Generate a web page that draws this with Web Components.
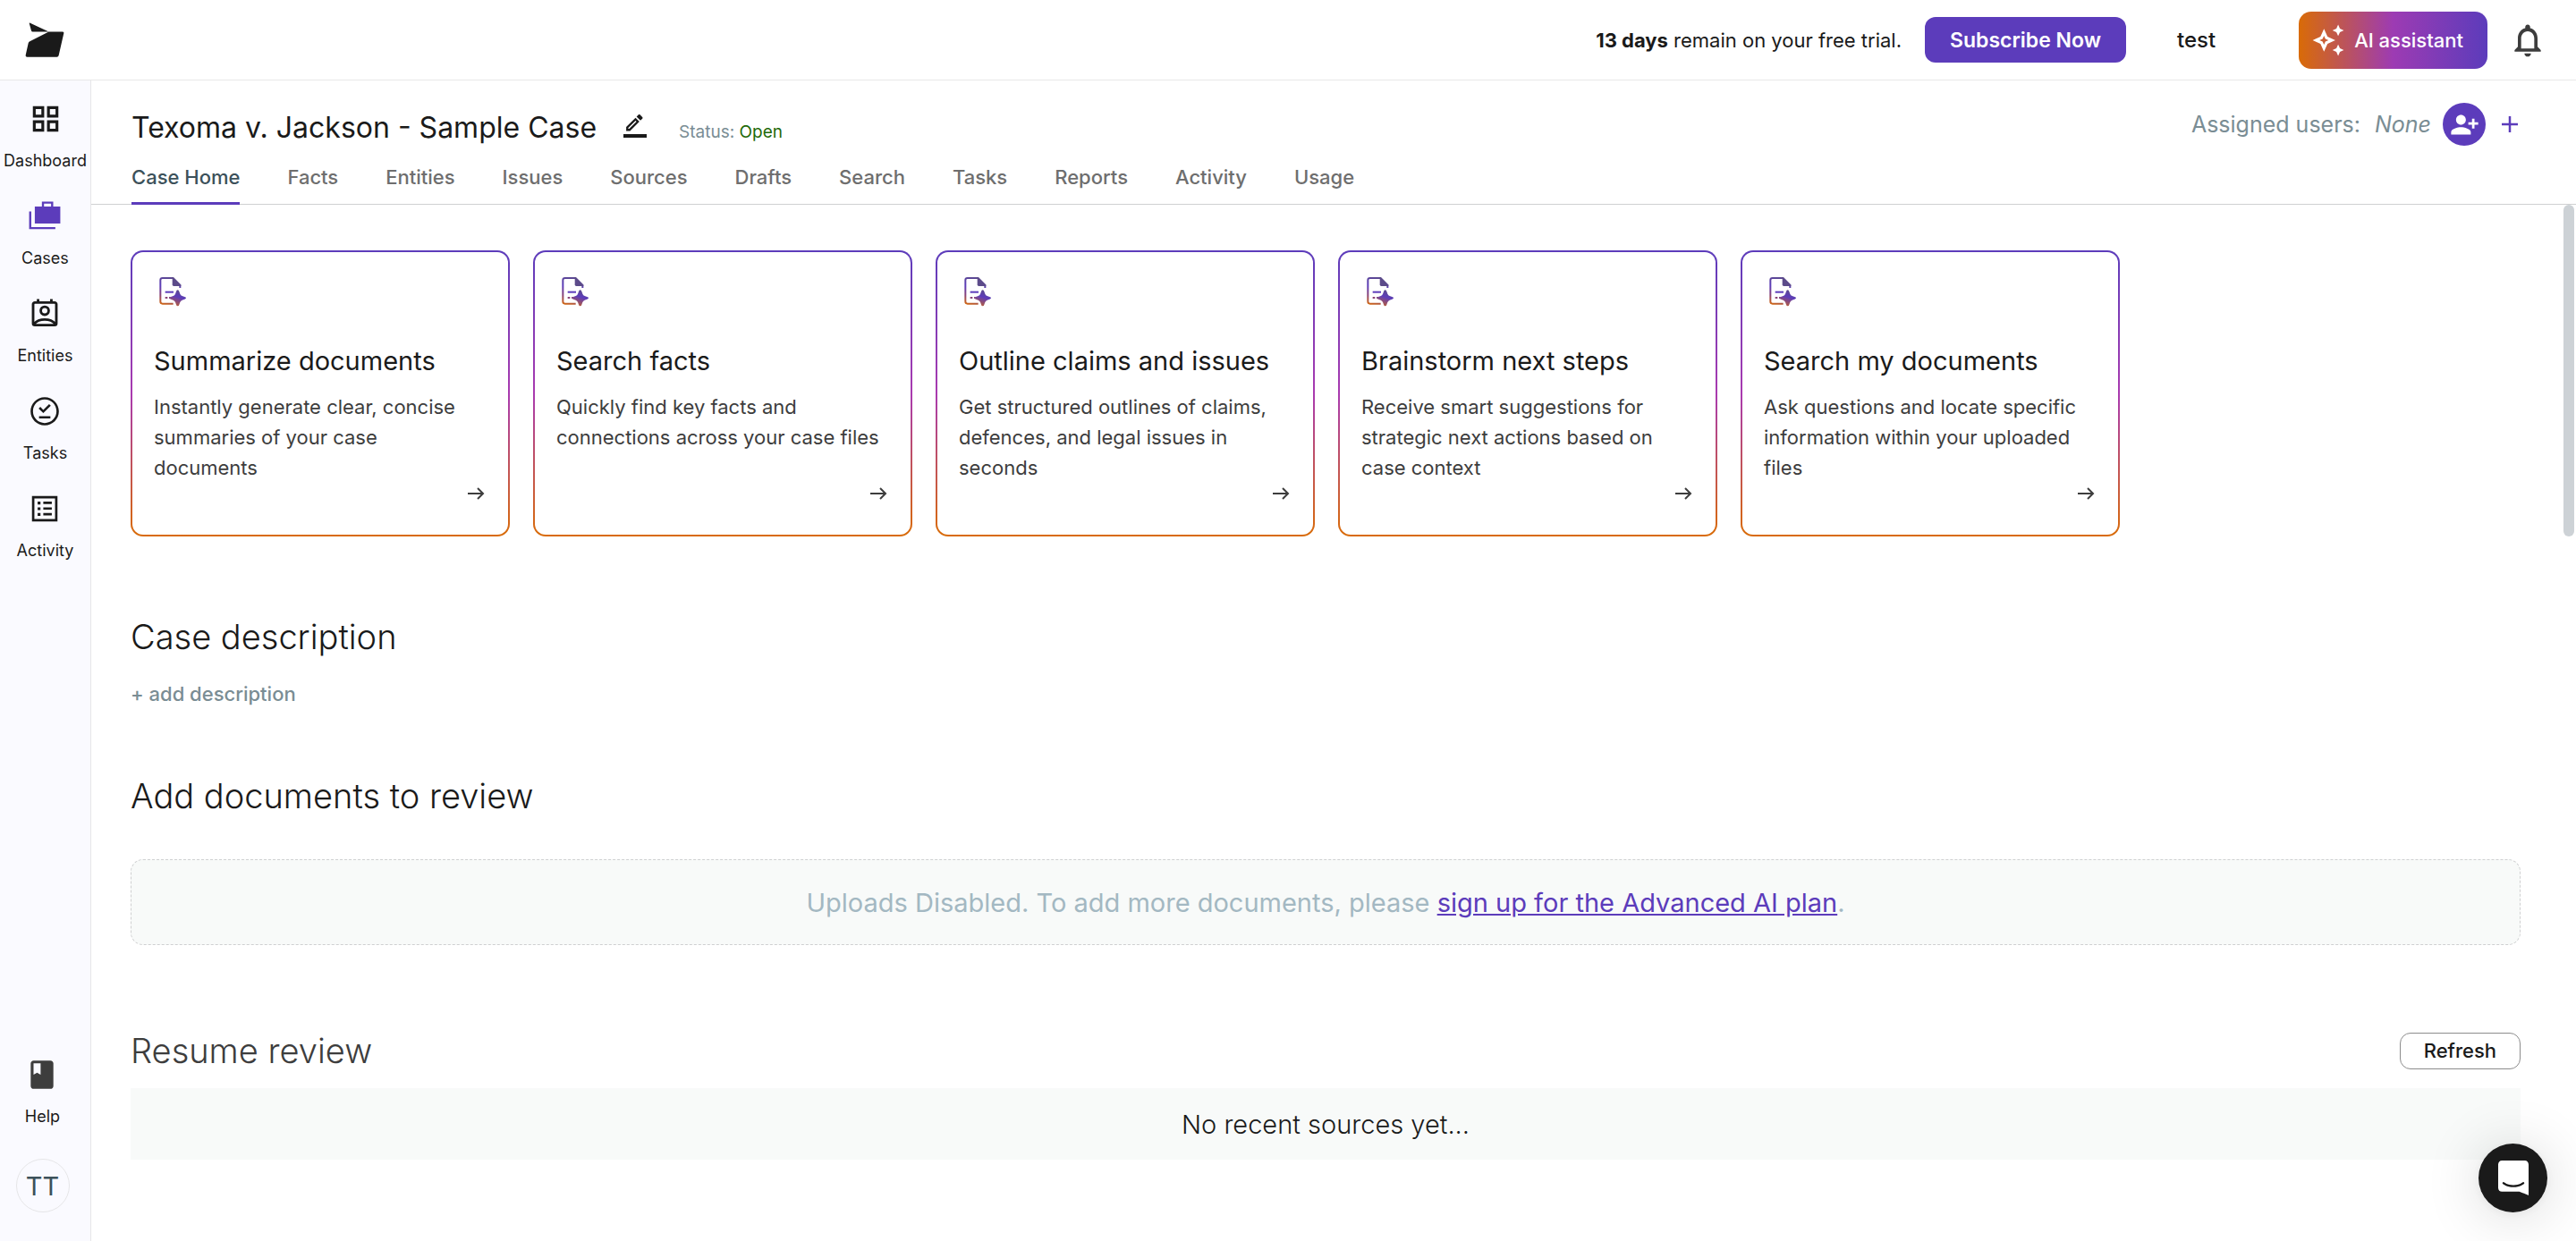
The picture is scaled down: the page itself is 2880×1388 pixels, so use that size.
<!DOCTYPE html>
<html lang="en">
<head>
<meta charset="utf-8">
<title>Texoma v. Jackson - Sample Case</title>
<style>
    body {
        margin: 0;
        font-family: Inter, "Liberation Sans", sans-serif;
        color: #1a1a1a;
        background-color: #fff;
    }
</style>
</head>
<body>
<case-app>
    <top-bar slot="top" days="13" user="test"></top-bar>
    <side-nav slot="side">
        <nav-item icon="dashboard">Dashboard</nav-item>
        <nav-item icon="cases" active>Cases</nav-item>
        <nav-item icon="entities">Entities</nav-item>
        <nav-item icon="tasks">Tasks</nav-item>
        <nav-item icon="activity">Activity</nav-item>
        <nav-item slot="bottom" icon="help">Help</nav-item>
        <user-avatar slot="bottom">TT</user-avatar>
    </side-nav>
    <case-header slot="header" name="Texoma v. Jackson - Sample Case" status="Open"></case-header>

    <card-row>
        <prompt-card heading="Summarize documents">Instantly generate clear, concise summaries of your case documents</prompt-card>
        <prompt-card heading="Search facts">Quickly find key facts and connections across your case files</prompt-card>
        <prompt-card heading="Outline claims and issues">Get structured outlines of claims, defences, and legal issues in seconds</prompt-card>
        <prompt-card heading="Brainstorm next steps">Receive smart suggestions for strategic next actions based on case context</prompt-card>
        <prompt-card heading="Search my documents">Ask questions and locate specific information within your uploaded files</prompt-card>
    </card-row>
    <case-description></case-description>
    <upload-box></upload-box>
    <resume-review></resume-review>
    <chat-launcher slot="overlay"></chat-launcher>
</case-app>

<script>
const icons = {
    dashboard: '<path d="M3 3v8h8V3H3zm6 6H5V5h4v4zm-6 4v8h8v-8H3zm6 6H5v-4h4v4zm4-16v8h8V3h-8zm6 6h-4V5h4v4zm-6 4v8h8v-8h-8zm6 6h-4v-4h4v4z"/>',
    cases: '<path d="M5 5v12h18V5h-5V1.500h-8V5H5zm6.500-2h5v2h-5V3z"/><path d="M1 8.500h1.500V19.500H19.500V21H1z"/>',
    entities: '<path fill="none" stroke="currentColor" stroke-width="1.800" d="M5 4h14a1.200 1.200 0 0 1 1.200 1.200v13.600A1.200 1.200 0 0 1 19 20H5a1.200 1.200 0 0 1-1.200-1.200V5.200A1.200 1.200 0 0 1 5 4zM7.300 4V1.500M16.700 4V1.500M4.500 19c2-2.300 5-3 7.500-3s5.500.7 7.500 3"/><circle cx="12" cy="9.800" r="2.800" fill="none" stroke="currentColor" stroke-width="1.800"/>',
    tasks: '<path d="M12 2C6.500 2 2 6.500 2 12s4.500 10 10 10 10-4.500 10-10S17.500 2 12 2zm0 18.300c-4.600 0-8.300-3.700-8.300-8.300S7.400 3.700 12 3.700s8.300 3.700 8.300 8.300-3.700 8.300-8.300 8.300z"/><path d="M8 15.500h8v1.500H8zM16.300 8l-5.300 5.300-3.300-3.200 1.200-1.200 2.100 2.100 4.100-4.100z"/>',
    activity: '<path d="M3 3v18h18V3H3zm16.300 16.300H4.700V4.700h14.600v14.600z"/><path d="M7 7h2v2H7zM11 7h6v1.700h-6zM7 11h2v2H7zM11 11h6v1.700h-6zM7 15h2v2H7zM11 15h6v1.700h-6z"/>',
    help: '<path d="M18 2H6c-1.100 0-2 .9-2 2v16c0 1.100.9 2 2 2h12c1.100 0 2-.9 2-2V4c0-1.100-.9-2-2-2zM6 4h5v8l-2.500-1.500L6 12V4z"/>'
};

class BaseElement extends HTMLElement {
    constructor() {
        super();
        this.shadow = this.attachShadow({ mode: 'open' });
    }
    connectedCallback() {
        this.render();
    }
}

class CaseApp extends BaseElement {
    render() {
        this.shadow.innerHTML = /*html*/`
            <style>
                :host {
                    display: flex;
                    flex-direction: column;
                    height: 100vh;
                    overflow: hidden;
                }
                .columns {
                    display: flex;
                    flex: 1;
                    min-height: 0;
                }
                main {
                    display: flex;
                    flex-direction: column;
                    flex: 1;
                    min-width: 0;
                }
                .scroller {
                    position: relative;
                    flex: 1;
                    min-height: 0;
                    overflow: hidden;
                    padding: 51px 62px 44px 44px;
                }
                .thumb {
                    position: absolute;
                    top: 0;
                    right: 2px;
                    width: 12px;
                    height: 32%;
                    border-radius: 6px;
                    background-color: #cdd2d6;
                }
            </style>
            <slot name="top"></slot>
            <div class="columns">
                <slot name="side"></slot>
                <main>
                    <slot name="header"></slot>
                    <div class="scroller">
                        <slot></slot>
                        <div class="thumb"></div>
                    </div>
                </main>
            </div>
            <slot name="overlay"></slot>
        `;
    }
}

class TopBar extends BaseElement {
    render() {
        this.shadow.innerHTML = /*html*/`
            <style>
                :host {
                    display: flex;
                    align-items: center;
                    justify-content: space-between;
                    height: 89px;
                    flex: none;
                    padding: 0 32px 0 28px;
                    border-bottom: 1px solid #e8e8e8;
                    font-size: 22px;
                }
                svg {
                    display: block;
                }
                .right {
                    display: flex;
                    align-items: center;
                }
                button {
                    font-family: inherit;
                    border: 0;
                    cursor: pointer;
                }
                .subscribe {
                    height: 51px;
                    margin: 0 57px 0 26px;
                    padding: 0 28px;
                    border-radius: 12px;
                    background-color: #5c3cbb;
                    color: #fff;
                    font-size: 23px;
                    font-weight: 600;
                }
                .user {
                    margin-right: 93px;
                    font-size: 24px;
                    font-weight: 500;
                }
                .assistant {
                    display: flex;
                    align-items: center;
                    gap: 10px;
                    height: 64px;
                    margin-right: 23px;
                    padding: 0 27px 0 14px;
                    border-radius: 14px;
                    background: linear-gradient(90deg, #d96b07, #9d3bb3 50%, #5c3cbb);
                    color: #fff;
                    font-size: 22px;
                    font-weight: 500;
                }
                .bell {
                    padding: 0;
                    background: none;
                    color: #3d3d3d;
                }
            </style>
            <a href="#" aria-label="Home">
                <svg width="44" height="39" viewBox="0 0 129 116" fill="#1a1a1a">
                    <path d="M13 3q0-3 3-1l62 29H24q-3 0-4-3zM78 31h46q5 0 4 5l-17 74q-1 5-6 5H6q-6 0-5-6l9-40q1-4 5-6z"/>
                </svg>
            </a>
            <div class="right">
                <span><b>${this.getAttribute('days')} days</b> remain on your free trial.</span>
                <button class="subscribe">Subscribe Now</button>
                <span class="user">${this.getAttribute('user')}</span>
                <button class="assistant">
                    <svg width="38" height="38" viewBox="0 0 24 24" fill="currentColor">
                        <path d="M19 9l1.250-2.750L23 5l-2.750-1.250L19 1l-1.250 2.750L15 5l2.750 1.250L19 9zm0 6l-1.250 2.750L15 19l2.750 1.250L19 23l1.250-2.750L23 19l-2.750-1.250L19 15zm-7.500-5.500L9 4 6.500 9.500 1 12l5.500 2.500L9 20l2.500-5.500L17 12l-5.500-2.500zm-1.510 3.490L9 15.170l-.99-2.180L5.830 12l2.180-.99L9 8.830l.99 2.180 2.180.99-2.180.99z"/>
                    </svg>
                    AI assistant
                </button>
                <button class="bell" aria-label="Notifications">
                    <svg width="44" height="44" viewBox="0 0 24 24" fill="currentColor">
                        <path d="M12 22c1.100 0 2-.9 2-2h-4c0 1.100.9 2 2 2zm6-6v-5c0-3.070-1.630-5.640-4.500-6.320V4c0-.83-.67-1.500-1.500-1.500s-1.500.67-1.500 1.500v.68C7.640 5.360 6 7.920 6 11v5l-2 2v1h16v-1l-2-2zm-2 1H8v-6c0-2.480 1.510-4.500 4-4.500s4 2.020 4 4.500v6z"/>
                    </svg>
                </button>
            </div>
        `;
    }
}

class SideNav extends BaseElement {
    render() {
        this.shadow.innerHTML = /*html*/`
            <style>
                :host {
                    display: flex;
                    flex: none;
                    width: 101px;
                    background-color: #fafaff;
                    border-right: 1px solid #e6e6e8;
                }
                nav {
                    display: flex;
                    flex-direction: column;
                    justify-content: space-between;
                    width: 100%;
                    padding: 24px 0 32px;
                }
                .group {
                    display: flex;
                    flex-direction: column;
                    align-items: center;
                    gap: 32px;
                }
                .bottom {
                    gap: 36px;
                    padding-right: 6px;
                }
            </style>
            <nav>
                <div class="group"><slot></slot></div>
                <div class="group bottom"><slot name="bottom"></slot></div>
            </nav>
        `;
    }
}

class NavItem extends BaseElement {
    render() {
        this.shadow.innerHTML = /*html*/`
            <style>
                :host {
                    display: block;
                }
                a {
                    display: flex;
                    flex-direction: column;
                    align-items: center;
                    gap: 17px;
                    color: #1a1a1a;
                    font-size: 18px;
                    line-height: 22px;
                    text-decoration: none;
                }
                :host([active]) svg {
                    color: #5c3cbb;
                }
                :host([icon="help"]) svg {
                    color: #3d3d3d;
                }
            </style>
            <a href="#">
                <svg width="38" height="38" viewBox="0 0 24 24" fill="currentColor">${icons[this.getAttribute('icon')]}</svg>
                <span><slot></slot></span>
            </a>
        `;
    }
}

class UserAvatar extends BaseElement {
    render() {
        this.shadow.innerHTML = /*html*/`
            <style>
                :host {
                    display: flex;
                    align-items: center;
                    justify-content: center;
                    box-sizing: border-box;
                    width: 60px;
                    height: 60px;
                    border: 1px solid #e6e6e8;
                    border-radius: 50%;
                    color: #3c515a;
                    font-size: 29px;
                }
            </style>
            <slot></slot>
        `;
    }
}

class CaseHeader extends BaseElement {
    render() {
        const tabs = ['Case Home', 'Facts', 'Entities', 'Issues', 'Sources', 'Drafts', 'Search', 'Tasks', 'Reports', 'Activity', 'Usage'];
        this.shadow.innerHTML = /*html*/`
            <style>
                :host {
                    display: flex;
                    flex-direction: column;
                    gap: 21px;
                    flex: none;
                    padding: 25px 62px 0 45px;
                    border-bottom: 1px solid #cfd0d1;
                }
                .row {
                    display: flex;
                    align-items: flex-end;
                    justify-content: space-between;
                }
                .title {
                    display: flex;
                    align-items: baseline;
                }
                h1 {
                    margin: 0;
                    font-size: 32px;
                    line-height: 40px;
                    font-weight: 400;
                }
                button {
                    padding: 0;
                    border: 0;
                    background: none;
                    color: inherit;
                    font: inherit;
                    cursor: pointer;
                }
                .edit {
                    margin: 0 36px 0 30px;
                }
                .status {
                    color: #7a8d94;
                    font-size: 19px;
                }
                .status span {
                    color: #1f6a0a;
                }
                .users {
                    display: flex;
                    align-items: center;
                    color: #7a8d94;
                    font-size: 25px;
                }
                .users em {
                    margin: 0 13px 0 16px;
                }
                .users svg {
                    display: block;
                }
                .person {
                    display: flex;
                    align-items: center;
                    justify-content: center;
                    width: 48px;
                    height: 48px;
                    margin-right: 15px;
                    border-radius: 50%;
                    background-color: #5c3cbb;
                    color: #fff;
                }
                .add {
                    color: #5c3cbb;
                }
                nav {
                    display: flex;
                    gap: 53px;
                    margin-bottom: -1px;
                }
                nav a {
                    padding-bottom: 14px;
                    border-bottom: 3px solid transparent;
                    color: #6e6e6e;
                    font-size: 22px;
                    line-height: 28px;
                    font-weight: 500;
                    text-decoration: none;
                }
                nav a.active {
                    color: #3c515a;
                    border-color: #5c3cbb;
                }
            </style>
            <div class="row">
                <div class="title">
                    <h1>${this.getAttribute('name')}</h1>
                    <button class="edit" aria-label="Edit case name">
                        <svg width="26" height="26" viewBox="0 0 26 26" fill="currentColor">
                            <path d="M0 22h26v4H0z"/>
                            <path transform="scale(1.150) translate(-1.300 -2)" d="M16.810 8.940l-3.750-3.750L4 14.250V18h3.750l9.060-9.060zM6 16v-.92l7.060-7.060.92.92L6.920 16H6zm13.710-9.960c.39-.39.39-1.020 0-1.410l-2.340-2.340c-.39-.39-1.020-.39-1.410 0l-1.900 1.900 3.750 3.750z"/>
                        </svg>
                    </button>
                    <div class="status">Status: <span>${this.getAttribute('status')}</span></div>
                </div>
                <div class="users">
                    Assigned users: <em>None</em>
                    <button class="person" aria-label="Assign a user">
                        <svg width="33" height="33" viewBox="0 0 24 24" fill="currentColor">
                            <path d="M13 8c0-2.210-1.790-4-4-4S5 5.790 5 8s1.790 4 4 4 4-1.790 4-4zm2 2v2h3v3h2v-3h3v-2h-3V7h-2v3h-3zM1 18v2h16v-2c0-2.660-5.330-4-8-4s-8 1.340-8 4z"/>
                        </svg>
                    </button>
                    <button class="add" aria-label="Add">
                        <svg width="24" height="24" viewBox="0 0 24 24" fill="none" stroke="currentColor" stroke-width="2.500"><path d="M12 3v18M3 12h18"/></svg>
                    </button>
                </div>
            </div>
            <nav>${tabs.map((tab, i) => `<a href="#"${i === 0 ? ' class="active"' : ''}>${tab}</a>`).join('')}</nav>
        `;
    }
}

class CardRow extends BaseElement {
    render() {
        this.shadow.innerHTML = /*html*/`
            <style>
                :host {
                    display: flex;
                    flex-wrap: wrap;
                    gap: 26px;
                }
            </style>
            <slot></slot>
        `;
    }
}

class PromptCard extends BaseElement {
    render() {
        this.shadow.innerHTML = /*html*/`
            <style>
                :host {
                    display: flex;
                    width: 424px;
                }
                a {
                    display: flex;
                    flex-direction: column;
                    box-sizing: border-box;
                    width: 100%;
                    padding: 24px 24px 34px;
                    border: 2px solid transparent;
                    border-radius: 14px;
                    background:
                        linear-gradient(#fff, #fff) padding-box,
                        linear-gradient(180deg, #5c3cbb, #a93ab0 50%, #d96b07) border-box;
                    color: inherit;
                    text-decoration: none;
                }
                h2 {
                    margin: 40px 0 16px;
                    font-size: 29px;
                    line-height: 36px;
                    font-weight: 400;
                }
                p {
                    margin: 0;
                    padding-right: 4px;
                    color: #3d3d3d;
                    font-size: 22px;
                    line-height: 34px;
                }
                .arrow {
                    margin-top: auto;
                    align-self: flex-end;
                }
            </style>
            <a href="#">
                <svg width="40" height="40" viewBox="-19 -12 120 120">
                    <defs>
                        <linearGradient id="doc" gradientUnits="userSpaceOnUse" x1="50" y1="0" x2="20" y2="98">
                            <stop offset="0" stop-color="#5c4b8a"/>
                            <stop offset=".4" stop-color="#5c3cbb"/>
                            <stop offset=".7" stop-color="#8a4577"/>
                            <stop offset="1" stop-color="#d96b07"/>
                        </linearGradient>
                        <linearGradient id="star" gradientUnits="userSpaceOnUse" x1="68" y1="44" x2="50" y2="98">
                            <stop offset="0" stop-color="#5c4b8a"/>
                            <stop offset=".4" stop-color="#5c3cbb"/>
                            <stop offset="1" stop-color="#c0602f"/>
                        </linearGradient>
                    </defs>
                    <path d="M46 89H10q-7 0-7-7V10q0-7 7-7h35l24 24v9" fill="none" stroke="url(#doc)" stroke-width="6"/>
                    <path d="M43 1h4l25 25v4H48q-5 0-5-5z" fill="#5c4b8a"/>
                    <path d="M19 47h28v6H19z" fill="#5c3cbb"/>
                    <path d="M19 66h8v6h-8zM32 66h5v6h-5z" fill="#8a4577"/>
                    <path d="M61 43q4 0 5 5l3 8q2 5 7 7l8 3q5 1 5 4t-5 4l-8 3q-5 2-7 7l-3 8q-1 5-5 5t-5-5l-3-8q-2-5-7-7l-8-3q-5-1-5-4t5-4l8-3q5-2 7-7l3-8q1-5 5-5z" fill="url(#star)"/>
                </svg>
                <h2>${this.getAttribute('heading')}</h2>
                <p><slot></slot></p>
                <svg class="arrow" width="24" height="24" viewBox="0 0 24 24" fill="none" stroke="#3d3d3d" stroke-width="2"><path d="M3 12h17M14 6l6 6-6 6"/></svg>
            </a>
        `;
    }
}

// shared by the three sections under the cards
const sectionStyle = /*css*/`
    :host {
        display: block;
    }
    h2 {
        margin: 0;
        font-size: 38px;
        line-height: 48px;
        font-weight: 300;
    }
`;

class CaseDescription extends BaseElement {
    render() {
        this.shadow.innerHTML = /*html*/`
            <style>
                ${sectionStyle}
                :host {
                    margin-top: 88px;
                }
                button {
                    display: block;
                    margin-top: 26px;
                    padding: 0;
                    border: 0;
                    background: none;
                    color: #7a8d94;
                    font-family: inherit;
                    font-size: 22px;
                    line-height: 28px;
                    font-weight: 500;
                    cursor: pointer;
                }
            </style>
            <h2>Case description</h2>
            <button>+ add description</button>
        `;
    }
}

class UploadBox extends BaseElement {
    render() {
        this.shadow.innerHTML = /*html*/`
            <style>
                ${sectionStyle}
                :host {
                    margin-top: 76px;
                }
                .box {
                    display: flex;
                    align-items: center;
                    justify-content: center;
                    box-sizing: border-box;
                    min-height: 96px;
                    margin-top: 47px;
                    border: 1px dashed #cfd0d1;
                    border-radius: 14px;
                    background-color: #f8faf9;
                    color: #a3b8c2;
                    font-size: 29px;
                }
                p {
                    margin: 0;
                }
                a {
                    color: #5c3cbb;
                }
            </style>
            <h2>Add documents to review</h2>
            <div class="box">
                <p>Uploads Disabled. To add more documents, please <a href="#">sign up for the Advanced AI plan</a>.</p>
            </div>
        `;
    }
}

class ResumeReview extends BaseElement {
    render() {
        this.shadow.innerHTML = /*html*/`
            <style>
                ${sectionStyle}
                :host {
                    margin-top: 94px;
                }
                .head {
                    display: flex;
                    align-items: center;
                    justify-content: space-between;
                    margin-bottom: 18px;
                }
                h2 {
                    color: #3d3d3d;
                }
                button {
                    height: 41px;
                    padding: 0 26px;
                    border: 1px solid #8c8c8c;
                    border-radius: 12px;
                    background-color: #fff;
                    color: #1a1a1a;
                    font-family: inherit;
                    font-size: 22px;
                    font-weight: 500;
                    cursor: pointer;
                }
                .empty {
                    display: flex;
                    align-items: center;
                    justify-content: center;
                    min-height: 80px;
                    background-color: #f8faf9;
                    font-size: 29px;
                    font-weight: 300;
                }
            </style>
            <div class="head">
                <h2>Resume review</h2>
                <button>Refresh</button>
            </div>
            <div class="empty">No recent sources yet...</div>
        `;
    }
}

class ChatLauncher extends BaseElement {
    render() {
        this.shadow.innerHTML = /*html*/`
            <style>
                :host {
                    position: fixed;
                    right: 32px;
                    bottom: 32px;
                }
                button {
                    display: flex;
                    align-items: center;
                    justify-content: center;
                    width: 77px;
                    height: 77px;
                    padding: 0;
                    border: 0;
                    border-radius: 50%;
                    background-color: #1a1a1a;
                    box-shadow: 0 2px 12px rgba(0, 0, 0, .06), 0 4px 64px rgba(0, 0, 0, .16);
                    cursor: pointer;
                }
            </style>
            <button aria-label="Open chat">
                <svg width="34" height="39" viewBox="0 0 28 32" fill="#fff">
                    <path d="M28 32s-4.714-1.855-8.527-3.340H3.437C1.540 28.660 0 27.026 0 25.013V3.644C0 1.633 1.540 0 3.437 0h21.125c1.898 0 3.437 1.632 3.437 3.645v18.404H28V32zm-4.139-11.982a.88.88 0 0 0-1.292-.105c-.03.026-3.015 2.681-8.570 2.681-5.486 0-8.517-2.636-8.571-2.684a.88.88 0 0 0-1.290.107 1.010 1.010 0 0 0-.219.708.992.992 0 0 0 .318.664c.142.128 3.537 3.150 9.762 3.150 6.226 0 9.621-3.022 9.763-3.150a.992.992 0 0 0 .317-.664 1.010 1.010 0 0 0-.218-.707z"/>
                </svg>
            </button>
        `;
    }
}

customElements.define('case-app', CaseApp);
customElements.define('top-bar', TopBar);
customElements.define('side-nav', SideNav);
customElements.define('nav-item', NavItem);
customElements.define('user-avatar', UserAvatar);
customElements.define('case-header', CaseHeader);
customElements.define('card-row', CardRow);
customElements.define('prompt-card', PromptCard);
customElements.define('case-description', CaseDescription);
customElements.define('upload-box', UploadBox);
customElements.define('resume-review', ResumeReview);
customElements.define('chat-launcher', ChatLauncher);
</script>
</body>
</html>
